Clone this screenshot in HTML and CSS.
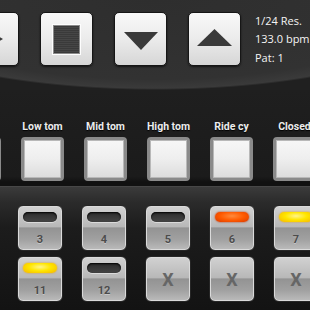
FILE: index.html
```html
<!DOCTYPE html>
<html lang="en">
<head>
    <meta charset="UTF-8">
    <meta name="viewport" content="width=device-width, initial-scale=1.0">
    <title>Drum Machine</title>
    <link rel="stylesheet" href="styles.css">
</head>
<body>

    <section class="transport">
        <div class="controls">
            <button class="tbtn" aria-label="Play">
                <svg width="20" height="22" viewBox="0 0 20 22"><polygon points="0,0 20,11 0,22" fill="#3a3a3a"/></svg>
            </button>
            <button class="tbtn" aria-label="Stop">
                <span class="stop-icon"></span>
            </button>
            <button class="tbtn tbtn-down" aria-label="Previous pattern">
                <svg width="34" height="18" viewBox="0 0 34 18"><polygon points="0,0 34,0 17,18" fill="#3a3a3a"/></svg>
            </button>
            <button class="tbtn tbtn-up" aria-label="Next pattern">
                <svg width="35" height="17" viewBox="0 0 35 17"><polygon points="17.5,0 35,17 0,17" fill="#3a3a3a"/></svg>
            </button>
        </div>
        <div class="status">
            <div>1/24 Res.</div>
            <div>133.0 bpm</div>
            <div>Pat: 1</div>
        </div>
    </section>

    <section class="mixer">
        <div class="channel"><span class="channel-label"></span><div class="channel-box"></div></div>
        <div class="channel"><span class="channel-label">Low tom</span><div class="channel-box"></div></div>
        <div class="channel"><span class="channel-label">Mid tom</span><div class="channel-box"></div></div>
        <div class="channel"><span class="channel-label">High tom</span><div class="channel-box"></div></div>
        <div class="channel"><span class="channel-label">Ride cy</span><div class="channel-box"></div></div>
        <div class="channel"><span class="channel-label">Closed</span><div class="channel-box"></div></div>
    </section>

    <section class="steps">
        <div class="pad"><span class="led"></span><span class="pad-num">3</span></div>
        <div class="pad"><span class="led"></span><span class="pad-num">4</span></div>
        <div class="pad"><span class="led"></span><span class="pad-num">5</span></div>
        <div class="pad"><span class="led led-orange"></span><span class="pad-num">6</span></div>
        <div class="pad"><span class="led led-yellow"></span><span class="pad-num">7</span></div>

        <div class="pad"><span class="led led-yellow"></span><span class="pad-num">11</span></div>
        <div class="pad"><span class="led"></span><span class="pad-num">12</span></div>
        <div class="pad pad-off">X</div>
        <div class="pad pad-off">X</div>
        <div class="pad pad-off">X</div>
    </section>

</body>
</html>
```

FILE: styles.css
```css
* {
    box-sizing: border-box;
}

html, body {
    margin: 0;
    padding: 0;
}

body {
    width: 310px;
    height: 310px;
    overflow: hidden;
    background: #161616;
    font-family: Roboto, "Liberation Sans", sans-serif;
}

/* top bar with transport buttons */
.transport {
    height: 90px;
    display: flex;
    padding-top: 12px;
    background: radial-gradient(311px 90px at 50% 0, #2e2e2e 0%, #323232 88%, #3a3a3a 98%, #202020 100%);
}

.controls {
    display: flex;
    gap: 21px;
    margin-left: -34px;
}

.tbtn {
    width: 53px;
    height: 54px;
    padding: 0;
    border: 1px solid #161616;
    border-radius: 5px;
    background: linear-gradient(#f8f8f8, #ebebeb 50%, #d6d6d6);
    box-shadow: 0 1px 2px rgba(0, 0, 0, 0.6);
    display: flex;
    align-items: center;
    justify-content: center;
    flex-shrink: 0;
}

.tbtn svg {
    display: block;
}

.tbtn-down svg {
    margin-top: 4px;
}

.tbtn-up svg {
    margin-bottom: 4px;
}

.stop-icon {
    width: 27px;
    height: 29px;
    border: 1px solid #8a8a8a;
    background: repeating-linear-gradient(#3a3a3a 0 1px, #464646 1px 2px);
    box-shadow: 0 0 0 1px #fdfdfd;
}

.status {
    margin-left: 14px;
    color: #f4f4f4;
    font-family: "Open Sans", Roboto, sans-serif;
    font-size: 11px;
    line-height: 18.3px;
    white-space: nowrap;
}

/* channel row */
.mixer {
    height: 96px;
    display: flex;
    margin-left: -52px;
    padding-top: 30px;
    background: linear-gradient(#1f1f1f, #1b1b1b 90%, #111 96%);
}

.channel {
    width: 63px;
    flex-shrink: 0;
    display: flex;
    flex-direction: column;
    align-items: center;
}

.channel-label {
    display: block;
    height: 13px;
    color: #ececec;
    font-size: 10.5px;
    font-weight: bold;
    line-height: 13px;
    margin-bottom: 4px;
    white-space: nowrap;
    text-shadow: 0 1px 1px #000;
}

.channel-box {
    width: 43px;
    height: 44px;
    border: 3px solid #8a8a8a;
    border-radius: 4px;
    background: linear-gradient(#f7f7f7, #eeeeee 50%, #dcdcdc);
    box-shadow: inset 0 0 0 1px #b8b8b8;
}

/* step pads */
.steps {
    height: 124px;
    border-top: 1px solid #474747;
    padding: 18px 0 0 17px;
    display: grid;
    grid-template-columns: repeat(5, 46px);
    grid-auto-rows: 46px;
    column-gap: 18px;
    row-gap: 5px;
    background: linear-gradient(#3b3b3b, #2b2b2b 15px, #1c1c1c 40px, #131313);
}

.pad {
    border-radius: 6px;
    border: 1px solid #262626;
    background: linear-gradient(#d2d2d2, #b8b8b8 47%, #939393 50%, #a0a0a0 75%, #bcbcbc);
    box-shadow: inset 0 0 0 1px #dadada;
    display: grid;
    grid-template-rows: 23px 1fr;
    justify-items: center;
}

.led {
    margin-top: 6px;
    width: 34px;
    height: 10px;
    border-radius: 5px;
    background: linear-gradient(#2c2c2c, #454545);
    box-shadow: inset 0 1px 2px #000, 0 1px 0 rgba(255, 255, 255, 0.45);
}

.led-yellow {
    background: radial-gradient(ellipse at 50% 40%, #fff48a 0%, #ffe600 45%, #f5b400 100%);
    box-shadow: 0 0 2px #e8a000;
}

.led-orange {
    background: radial-gradient(ellipse at 50% 40%, #ff8a3c 0%, #ff5a00 50%, #d83a00 100%);
    box-shadow: 0 0 2px #c03000;
}

.pad-num {
    align-self: center;
    color: #4c4c4c;
    font-size: 11px;
    font-weight: bold;
    text-shadow: 0 1px 0 rgba(255, 255, 255, 0.35);
}

.pad-off {
    display: flex;
    align-items: center;
    justify-content: center;
    color: #666;
    font-size: 18px;
    font-weight: bold;
}
```
